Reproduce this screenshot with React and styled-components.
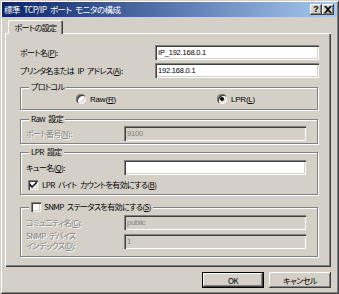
import React from "react";
import styled, { createGlobalStyle, css } from "styled-components";

const GlobalStyle = createGlobalStyle`
  html, body { margin: 0; padding: 0; background: #D4D0C8; }
  body {
    font-family: "Noto Sans CJK JP", "Liberation Sans", sans-serif;
    font-size: 8px;
    letter-spacing: -0.6px;
    word-spacing: 2px;
    color: #000;
    font-feature-settings: "palt" 1;
  }
  * { box-sizing: border-box; }
`;

const raised = css`
  box-shadow: inset -1px -1px 0 #404040, inset 1px 1px 0 #ffffff,
    inset -2px -2px 0 #808080, inset 2px 2px 0 #d4d0c8;
`;

const Window = styled.div`
  width: 339px;
  height: 294px;
  background: #d4d0c8;
  padding: 2px;
  display: flex;
  flex-direction: column;
  box-shadow: inset 1px 1px 0 #d4d0c8, inset -1px -1px 0 #404040,
    inset 2px 2px 0 #ffffff, inset -2px -2px 0 #808080;
`;

const TitleBar = styled.div`
  height: 15px;
  display: flex;
  align-items: center;
  padding: 0 3px 0 2px;
  background: linear-gradient(to right, #0a246a, #a6caf0);
`;

const Title = styled.span`
  flex: 1;
  color: #fff;
  font-size: 8.5px;
  letter-spacing: -0.5px;
  word-spacing: 2px;
  white-space: nowrap;
  line-height: 15px;
`;

const CaptionButtons = styled.div`
  display: flex;
`;

const CaptionButton = styled.span`
  width: 12px;
  height: 11px;
  display: flex;
  align-items: center;
  justify-content: center;
  background: #d4d0c8;
  font-family: "Liberation Sans", sans-serif;
  font-weight: bold;
  font-size: 9px;
  letter-spacing: 0;
  line-height: 1;
  ${raised}
`;

const Content = styled.div`
  flex: 1;
  display: flex;
  flex-direction: column;
  padding: 3px 0 0 3px;
`;

const TabStrip = styled.div`
  display: flex;
  padding-left: 3px;
`;

const Tab = styled.div`
  position: relative;
  z-index: 1;
  height: 14px;
  margin-bottom: -1px;
  width: 55px;
  display: flex;
  align-items: center;
  justify-content: center;
  background: #d4d0c8;
  border-radius: 2px 2px 0 0;
  white-space: nowrap;
  box-shadow: inset 1px 1px 0 #ffffff, inset -1px 0 0 #404040,
    inset -2px 0 0 #808080;
`;

const Panel = styled.div`
  width: 326px;
  height: 234px;
  display: flex;
  flex-direction: column;
  padding: 12px 12px 0 15px;
  box-shadow: inset 1px 1px 0 #ffffff, inset -1px -1px 0 #404040,
    inset -2px -2px 0 #808080;
`;

const FieldRow = styled.div`
  display: grid;
  grid-template-columns: ${(p) => p.$labelWidth || 135}px 1fr;
  align-items: center;
  margin-top: ${(p) => p.$gap || 0}px;
`;

const Label = styled.label`
  white-space: nowrap;
  line-height: ${(p) => (p.$lh ? p.$lh : 11)}px;
  ${(p) =>
    p.$disabled &&
    css`
      color: #808080;
      text-shadow: 1px 1px 0 #fff;
    `}
`;

const TextBox = styled.input`
  height: 15px;
  width: 100%;
  border: none;
  outline: none;
  margin: 0;
  padding: 0 3px;
  font-family: "Liberation Sans", sans-serif;
  font-size: 7.5px;
  letter-spacing: -0.2px;
  color: ${(p) => (p.disabled ? "#808080" : "#000")};
  background: ${(p) => (p.disabled ? "#d4d0c8" : "#ffffff")};
  box-shadow: inset 1px 1px 0 #808080, inset 2px 2px 0 #404040,
    inset -1px -1px 0 #ffffff, inset -2px -2px 0 #d4d0c8;
`;

const Group = styled.fieldset`
  margin: ${(p) => p.$mt || 0}px 1px 0 0;
  padding: ${(p) => p.$pad || "0 11px 4px 5px"};
  border: 1px solid #808080;
  box-shadow: 1px 1px 0 #ffffff, inset 1px 1px 0 #ffffff;
  min-width: 0;
`;

const Legend = styled.legend`
  padding: 0 2px;
  margin-left: 3px;
  line-height: 12px;
  background: #d4d0c8;
  display: flex;
  align-items: center;
  gap: 3px;
  white-space: nowrap;
`;

const RadioRow = styled.div`
  display: grid;
  grid-template-columns: 1fr 1fr;
  height: 12px;
  align-items: center;
  justify-items: center;
`;

const RadioOption = styled.span`
  display: flex;
  align-items: center;
  gap: 4px;
  letter-spacing: -0.2px;
  font-family: "Liberation Sans", "Noto Sans CJK JP", sans-serif;
`;

const RadioDot = styled.span`
  width: 10px;
  height: 10px;
  border-radius: 50%;
  background: #fff;
  display: inline-flex;
  align-items: center;
  justify-content: center;
  box-shadow: inset 1px 1px 0 #808080, inset 2px 2px 0 #404040,
    inset -1px -1px 0 #ffffff, inset -2px -2px 0 #d4d0c8;
  &::after {
    content: "";
    width: 4px;
    height: 4px;
    border-radius: 50%;
    background: ${(p) => (p.$checked ? "#000" : "transparent")};
  }
`;

const CheckRow = styled.div`
  display: flex;
  align-items: center;
  gap: 4px;
  margin-top: ${(p) => p.$gap || 0}px;
  margin-left: ${(p) => p.$indent || 0}px;
  line-height: 11px;
  white-space: nowrap;
`;

const CheckBox = styled.span`
  width: 10px;
  height: 10px;
  flex: none;
  background: #fff;
  display: inline-flex;
  align-items: center;
  justify-content: center;
  box-shadow: inset 1px 1px 0 #808080, inset 2px 2px 0 #404040,
    inset -1px -1px 0 #ffffff, inset -2px -2px 0 #d4d0c8;
`;

const ButtonRow = styled.div`
  display: flex;
  justify-content: flex-end;
  gap: 5px;
  padding: 5px 6px 0 0;
`;

const Button = styled.button`
  width: 62px;
  height: 16px;
  margin: 0;
  padding: 0;
  font-family: "Noto Sans CJK JP", "Liberation Sans", sans-serif;
  font-feature-settings: "palt" 1;
  font-size: 8px;
  letter-spacing: -0.5px;
  color: #000;
  background: #d4d0c8;
  border: ${(p) => (p.$default ? "1px solid #000" : "none")};
  ${raised}
`;

const Check = () => (
  <svg width="7" height="7" viewBox="0 0 7 7">
    <path d="M0 2 L0 5 L2 7 L7 2 L7 0 L2 5 Z" fill="#000" />
  </svg>
);

const CloseGlyph = () => (
  <svg width="8" height="7" viewBox="0 0 8 7">
    <path d="M0 0h2l2 2 2-2h2L5 3.5 8 7H6L4 5 2 7H0l3-3.5z" fill="#000" />
  </svg>
);

export default function App() {
  return (
    <>
      <GlobalStyle />
      <Window>
        <TitleBar>
          <Title>標準 TCP/IP ポート モニタの構成</Title>
          <CaptionButtons>
            <CaptionButton>?</CaptionButton>
            <CaptionButton>
              <CloseGlyph />
            </CaptionButton>
          </CaptionButtons>
        </TitleBar>
        <Content>
          <TabStrip>
            <Tab>ポートの設定</Tab>
          </TabStrip>
          <Panel>
            <FieldRow>
              <Label>
                ポート名(<u>P</u>):
              </Label>
              <TextBox readOnly value="IP_192.168.0.1" />
            </FieldRow>
            <FieldRow $gap={3}>
              <Label>
                プリンタ名または IP アドレス(<u>A</u>):
              </Label>
              <TextBox readOnly value="192.168.0.1" />
            </FieldRow>

            <Group $mt={3} $pad="0 11px 4px 5px">
              <Legend>プロトコル</Legend>
              <RadioRow>
                <RadioOption>
                  <RadioDot />
                  <span>
                    Raw(<u>R</u>)
                  </span>
                </RadioOption>
                <RadioOption>
                  <RadioDot $checked />
                  <span>
                    LPR(<u>L</u>)
                  </span>
                </RadioOption>
              </RadioRow>
            </Group>

            <Group $mt={3} $pad="1px 11px 2px 5px">
              <Legend>Raw 設定</Legend>
              <FieldRow $labelWidth={98}>
                <Label $disabled>
                  ポート番号(<u>N</u>):
                </Label>
                <TextBox disabled value="9100" readOnly />
              </FieldRow>
            </Group>

            <Group $mt={2} $pad="2px 11px 4px 5px">
              <Legend>LPR 設定</Legend>
              <FieldRow $labelWidth={98}>
                <Label>
                  キュー名(<u>Q</u>):
                </Label>
                <TextBox readOnly value="" />
              </FieldRow>
              <CheckRow $gap={4} $indent={2}>
                <CheckBox>
                  <Check />
                </CheckBox>
                <span>
                  LPR バイト カウントを有効にする(<u>B</u>)
                </span>
              </CheckRow>
            </Group>

            <Group $mt={6} $pad="2px 11px 5px 5px">
              <Legend>
                <CheckBox />
                <span>
                  SNMP ステータスを有効にする(<u>S</u>)
                </span>
              </Legend>
              <FieldRow $labelWidth={98}>
                <Label $disabled>
                  コミュニティ名(<u>C</u>):
                </Label>
                <TextBox disabled readOnly value="public" />
              </FieldRow>
              <FieldRow $labelWidth={98} $gap={1}>
                <Label $disabled $lh={10}>
                  SNMP デバイス
                  <br />
                  インデックス(<u>D</u>):
                </Label>
                <TextBox disabled readOnly value="1" />
              </FieldRow>
            </Group>
          </Panel>
          <ButtonRow>
            <Button $default>OK</Button>
            <Button>キャンセル</Button>
          </ButtonRow>
        </Content>
      </Window>
    </>
  );
}
